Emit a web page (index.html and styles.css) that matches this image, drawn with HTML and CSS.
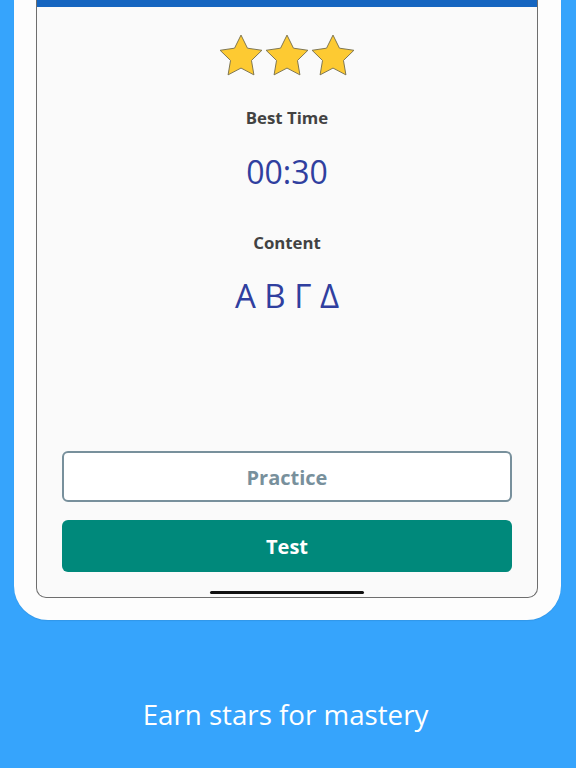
FILE: index.html
```html
<!DOCTYPE html>
<html lang="en">
<head>
<meta charset="utf-8">
<title>Earn stars for mastery</title>
<link rel="stylesheet" href="styles.css">
</head>
<body>
<div class="page">
  <div class="frame">
    <div class="screen">
      <div class="topbar"></div>
      <div class="stars">
        <svg class="star" viewBox="1 1 22 22" width="46" height="46"><path d="M12 2l3.09 6.26L22 9.27l-5 4.87 1.18 6.88L12 17.77l-6.18 3.25L7 14.14 2 9.27l6.91-1.01L12 2z"/></svg>
        <svg class="star" viewBox="1 1 22 22" width="46" height="46"><path d="M12 2l3.09 6.26L22 9.27l-5 4.87 1.18 6.88L12 17.77l-6.18 3.25L7 14.14 2 9.27l6.91-1.01L12 2z"/></svg>
        <svg class="star" viewBox="1 1 22 22" width="46" height="46"><path d="M12 2l3.09 6.26L22 9.27l-5 4.87 1.18 6.88L12 17.77l-6.18 3.25L7 14.14 2 9.27l6.91-1.01L12 2z"/></svg>
      </div>
      <div class="label label-time">Best Time</div>
      <div class="value value-time">00:30</div>
      <div class="label label-content">Content</div>
      <div class="value value-content">Α Β Γ Δ</div>
      <div class="actions">
        <div class="btn btn-practice">Practice</div>
        <div class="btn btn-test">Test</div>
      </div>
      <div class="home-indicator"></div>
    </div>
  </div>
  <div class="caption">Earn stars for mastery</div>
</div>
</body>
</html>
```
FILE: styles.css
```css
html, body {
  margin: 0;
  padding: 0;
}
body {
  background: #36a4fc;
  font-family: "Open Sans", "Noto Sans", sans-serif;
  width: 576px;
  height: 768px;
  overflow: hidden;
}
.page {
  display: flex;
  flex-direction: column;
}
.frame {
  margin-left: 14px;
  width: 547px;
  height: 620px;
  box-sizing: border-box;
  background: #fdfdfd;
  border-radius: 0 0 34px 34px;
  padding: 0 23px 22px 22px;
  box-shadow: 0 1px 1px rgba(0,0,0,0.08);
}
.screen {
  height: 598px;
  box-sizing: border-box;
  background: #fafafa;
  border: 1px solid #6e6e6e;
  border-top: none;
  border-radius: 0 0 10px 10px;
  display: flex;
  flex-direction: column;
  align-items: center;
}
.topbar {
  align-self: stretch;
  height: 7px;
  background: #1565c0;
}
.stars {
  display: flex;
  margin-top: 26px;
}
.star {
  display: block;
}
.star path {
  fill: #fdca32;
  stroke: #77704e;
  stroke-width: 0.45;
  stroke-linejoin: miter;
}
.label {
  font-size: 16.8px;
  font-weight: 700;
  line-height: 22px;
  color: #424242;
}
.label-time {
  margin-top: 28px;
}
.label-content {
  margin-top: 38px;
}
.value {
  font-size: 32px;
  line-height: 44px;
  color: #303f9f;
}
.value-time {
  margin-top: 21px;
}
.value-content {
  margin-top: 20px;
  font-size: 33px;
}
.actions {
  margin-top: auto;
  align-self: stretch;
  padding: 0 25px;
  display: flex;
  flex-direction: column;
  gap: 18px;
}
.btn {
  box-sizing: border-box;
  border-radius: 6px;
  font-size: 20px;
  font-weight: 700;
  display: flex;
  align-items: center;
  justify-content: center;
}
.btn-practice {
  height: 51px;
  background: #ffffff;
  border: 2px solid #78909c;
  color: #78909c;
  padding-top: 2px;
}
.btn-test {
  height: 52px;
  background: #00897b;
  color: #ffffff;
}
.home-indicator {
  width: 154px;
  height: 3px;
  border-radius: 2px;
  background: #111111;
  margin-top: 19px;
  margin-bottom: 3px;
}
.caption {
  margin-top: 74px;
  text-align: center;
  color: #ffffff;
  font-size: 27.7px;
  line-height: 40px;
  padding-right: 5px;
}
```
